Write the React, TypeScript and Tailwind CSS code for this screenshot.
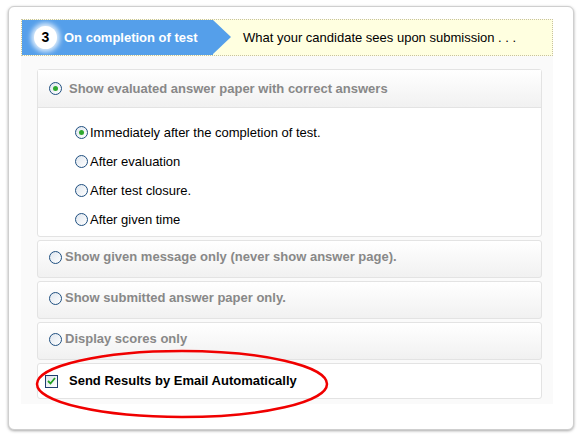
import React from 'react'

const font = { fontFamily: '"Liberation Sans", Arial, sans-serif' }

function Radio({ checked = false }: { checked?: boolean }) {
  return (
    <span className="inline-flex h-[13px] w-[13px] shrink-0 items-center justify-center rounded-full border border-[#1f4f80] bg-gradient-to-br from-[#dfe6ee] to-white">
      {checked && <span className="h-[5px] w-[5px] rounded-full bg-[#2fa82f]" />}
    </span>
  )
}

function OptionBox({ label }: { label: string }) {
  return (
    <div className="flex h-[38px] items-center gap-[3px] rounded-[3px] border border-[#e3e3e3] bg-gradient-to-b from-white to-[#f1f1f1] pl-[11px] pb-[4px]">
      <Radio />
      <span className="text-[13px] font-bold text-[#888]">{label}</span>
    </div>
  )
}

export default function App() {
  const subOptions = [
    'Immediately after the completion of test.',
    'After evaluation',
    'After test closure.',
    'After given time',
  ]

  return (
    <div className="h-[439px] w-[580px] bg-white pl-[8px] pt-[6px]" style={font}>
      <div className="h-[424px] w-[566px] rounded-[6px] border border-[#cfcfcf] bg-white pl-[12px] pt-[12px] shadow-[0_1px_3px_rgba(0,0,0,0.35)]">
        {/* step header */}
        <div className="flex h-[37px] w-[532px] border border-dotted border-[#c8c2a0] bg-[#ffffe0]">
          <div className="relative flex h-full w-[191px] items-center bg-[#559fea] pl-[12px]">
            <span className="flex h-[23px] w-[23px] items-center justify-center rounded-full bg-white text-[14px] font-bold text-black shadow-[0_0_5px_3px_rgba(255,255,255,0.8)]">
              3
            </span>
            <span className="ml-[7px] text-[13px] font-bold text-white">On completion of test</span>
            <span className="absolute left-full top-0 h-0 w-0 border-y-[17.5px] border-l-[18px] border-y-transparent border-l-[#559fea]" />
          </div>
          <div className="flex items-center pl-[30px] text-[13px] text-black">
            What your candidate sees upon submission . . .
          </div>
        </div>

        {/* options panel */}
        <div className="flex h-[348px] w-[532px] flex-col gap-[3px] bg-[#fafafa] pl-[16px] pr-[11px] pt-[13px]">
          <div className="rounded-[3px] border border-[#e3e3e3] bg-white">
            <div className="flex h-[38px] items-center gap-[7px] border-b border-[#e3e3e3] bg-gradient-to-b from-white to-[#f1f1f1] pl-[11px]">
              <Radio checked />
              <span className="text-[13px] font-bold text-[#888]">
                Show evaluated answer paper with correct answers
              </span>
            </div>
            <div className="flex flex-col gap-[10px] pb-[7px] pl-[37px] pt-[15px]">
              {subOptions.map((o, i) => (
                <div key={o} className="flex h-[19px] items-center gap-[2px] text-[13px] text-black">
                  <Radio checked={i === 0} />
                  <span>{o}</span>
                </div>
              ))}
            </div>
          </div>
          <OptionBox label="Show given message only (never show answer page)." />
          <OptionBox label="Show submitted answer paper only." />
          <OptionBox label="Display scores only" />
          <div className="relative flex h-[36px] items-center gap-[11px] rounded-[3px] border border-[#e3e3e3] bg-white pl-[7px]">
            <span className="flex h-[13px] w-[13px] items-center justify-center border border-[#1f3f6f] bg-gradient-to-br from-[#dde3ea] to-white">
              <svg width="9" height="8" viewBox="0 0 9 8">
                <path d="M1 4 L3.5 6.5 L8 1" fill="none" stroke="#21a021" strokeWidth="1.8" />
              </svg>
            </span>
            <span className="text-[13px] font-bold text-black">Send Results by Email Automatically</span>
            <svg className="pointer-events-none absolute left-[-4px] top-[-15px]" width="296" height="72" viewBox="0 0 296 72">
              <ellipse cx="148" cy="35" rx="145" ry="33" fill="none" stroke="#f00000" strokeWidth="2.5" />
            </svg>
          </div>
        </div>
      </div>
    </div>
  )
}
